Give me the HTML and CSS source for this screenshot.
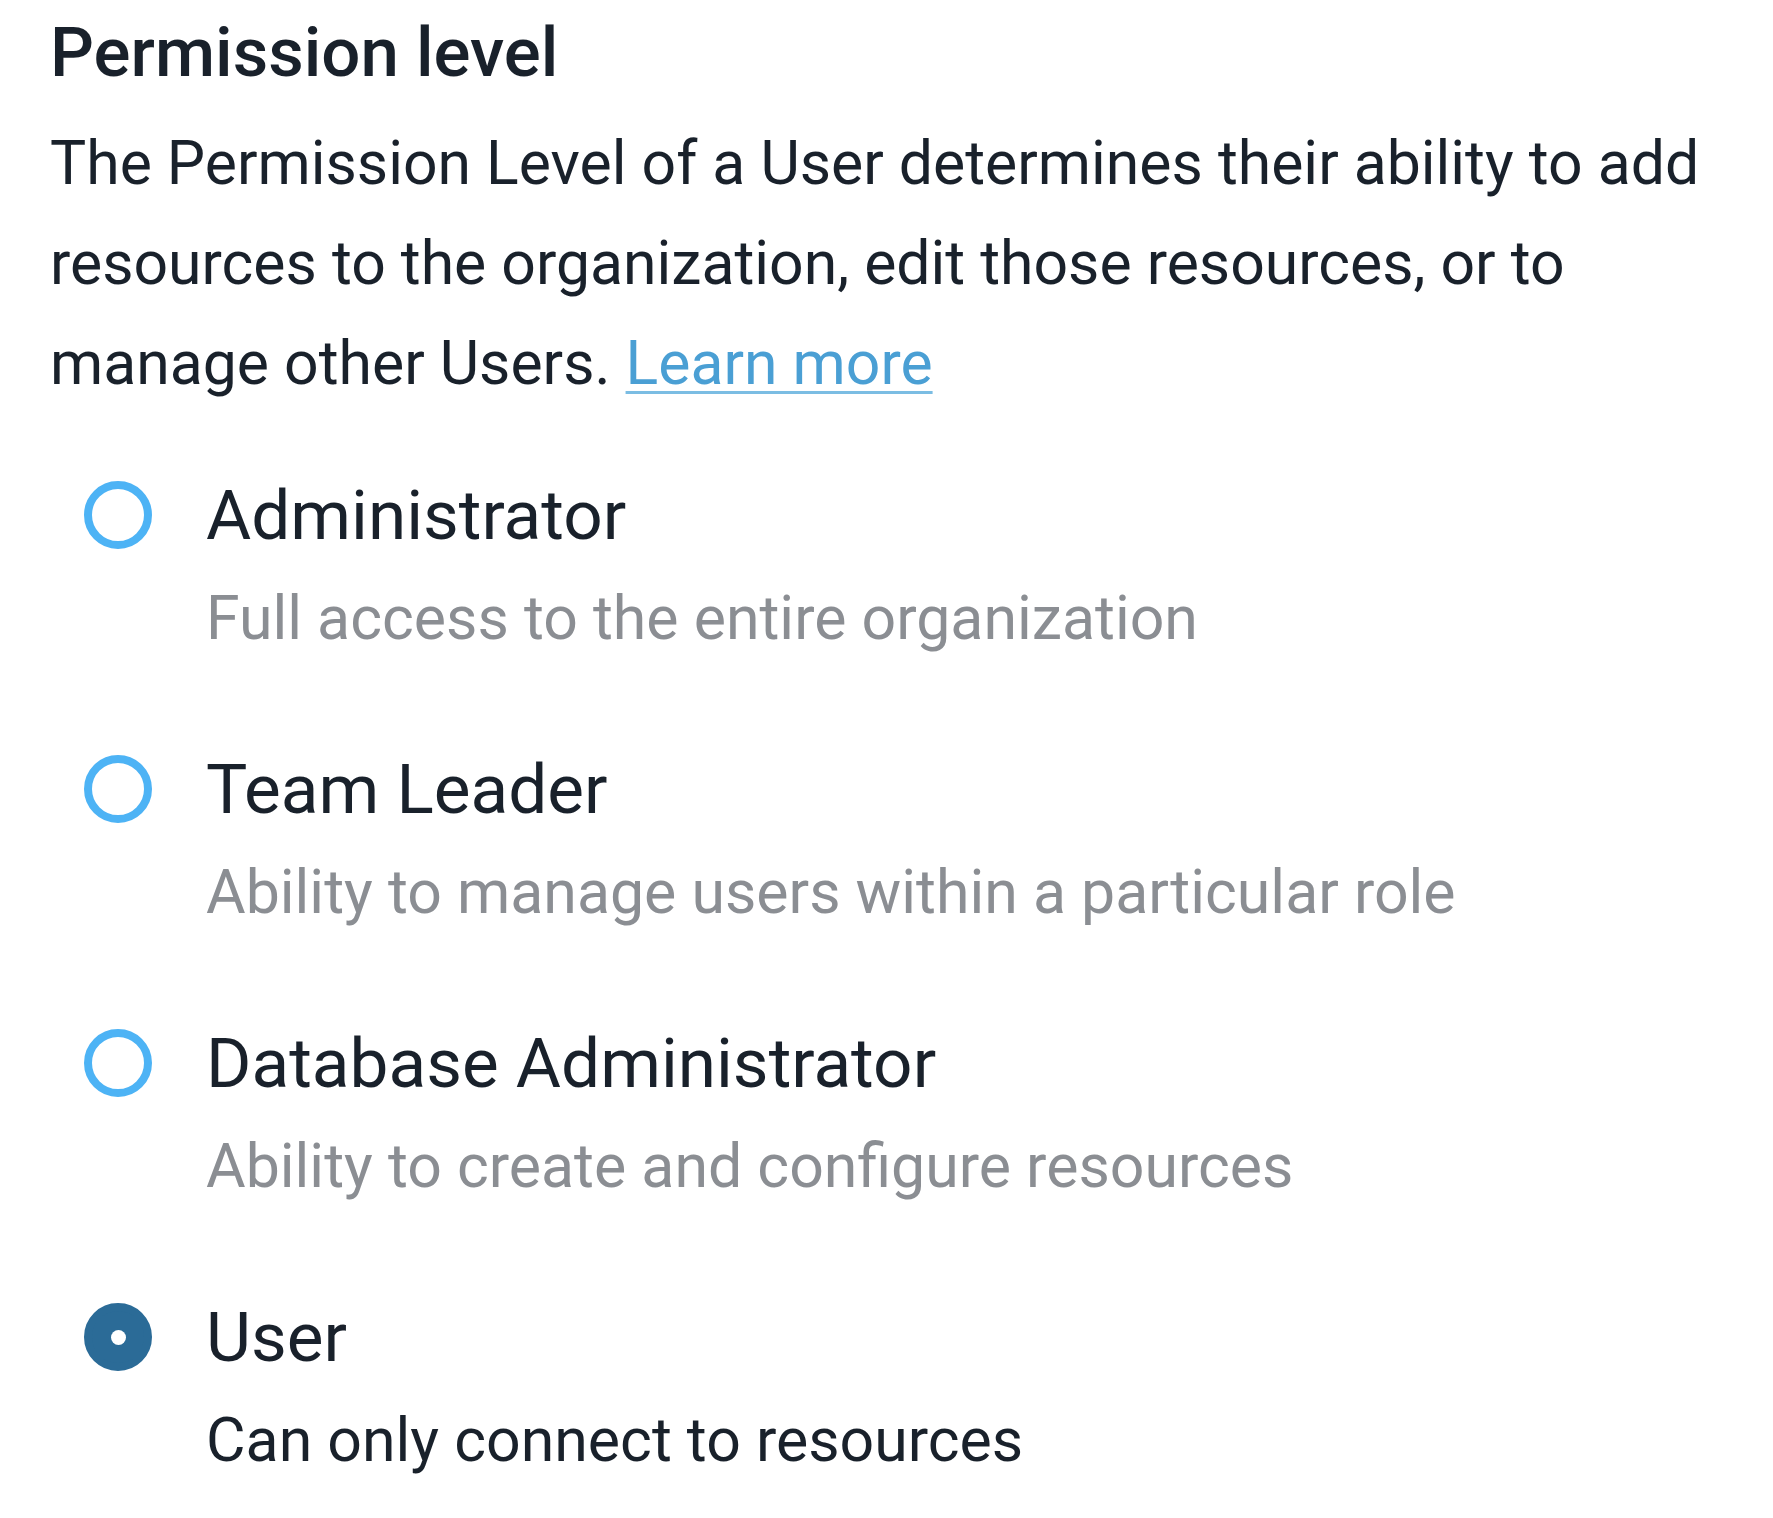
FILE: index.html
```html
<!DOCTYPE html>
<html lang="en">
<head>
<meta charset="utf-8">
<title>Permission level</title>
<link rel="stylesheet" href="styles.css">
</head>
<body>
<section class="permission">
  <h2 class="permission__title">Permission level</h2>
  <p class="permission__intro">The Permission Level of a User determines their ability to add resources to the organization, edit those resources, or to manage other Users. <a class="permission__link" href="#">Learn more</a></p>
  <div class="options">
    <label class="option">
      <span class="radio"></span>
      <span class="option__text">
        <span class="option__label">Administrator</span>
        <span class="option__desc">Full access to the entire organization</span>
      </span>
    </label>
    <label class="option">
      <span class="radio"></span>
      <span class="option__text">
        <span class="option__label">Team Leader</span>
        <span class="option__desc">Ability to manage users within a particular role</span>
      </span>
    </label>
    <label class="option">
      <span class="radio"></span>
      <span class="option__text">
        <span class="option__label">Database Administrator</span>
        <span class="option__desc">Ability to create and configure resources</span>
      </span>
    </label>
    <label class="option option--checked">
      <span class="radio radio--checked"></span>
      <span class="option__text">
        <span class="option__label">User</span>
        <span class="option__desc option__desc--dark">Can only connect to resources</span>
      </span>
    </label>
  </div>
</section>
</body>
</html>
```
FILE: styles.css
```css
html, body {
  margin: 0;
  padding: 0;
  background: #ffffff;
}

body {
  font-family: Roboto, "Liberation Sans", Arial, sans-serif;
  color: #19212b;
}

.permission {
  width: 1740px;
  padding: 11px 0 0 50px;
  box-sizing: border-box;
}

.permission__title {
  margin: 0;
  font-size: 69px;
  line-height: 84px;
  font-weight: 500;
  color: #19212b;
}

.permission__intro {
  margin: 19px 0 0;
  font-size: 60.7px;
  line-height: 100px;
  color: #19212b;
}

.permission__link {
  color: #4a9fd4;
  text-decoration: underline;
  text-decoration-color: #7bbde3;
  text-underline-offset: 7px;
  text-decoration-thickness: 3px;
}

.options {
  display: flex;
  flex-direction: column;
  gap: 71px;
  margin-top: 52px;
  padding-left: 34px;
}

.option {
  display: flex;
  align-items: flex-start;
  gap: 54px;
}

.radio {
  flex: none;
  width: 68px;
  height: 68px;
  margin-top: 15px;
  border: 8px solid #4db3f5;
  border-radius: 50%;
  box-sizing: border-box;
  display: flex;
  align-items: center;
  justify-content: center;
}

.radio--checked {
  background: #2b6b97;
  border-color: #2b6b97;
}

.radio--checked::after {
  content: "";
  width: 15px;
  height: 15px;
  border-radius: 50%;
  background: #ffffff;
}

.option__text {
  display: flex;
  flex-direction: column;
  gap: 3px;
}

.option__label {
  font-size: 69.3px;
  line-height: 100px;
  color: #19212b;
}

.option__desc {
  font-size: 60.8px;
  line-height: 100px;
  color: #8b8e93;
}

.option__desc--dark {
  color: #19212b;
}
```
